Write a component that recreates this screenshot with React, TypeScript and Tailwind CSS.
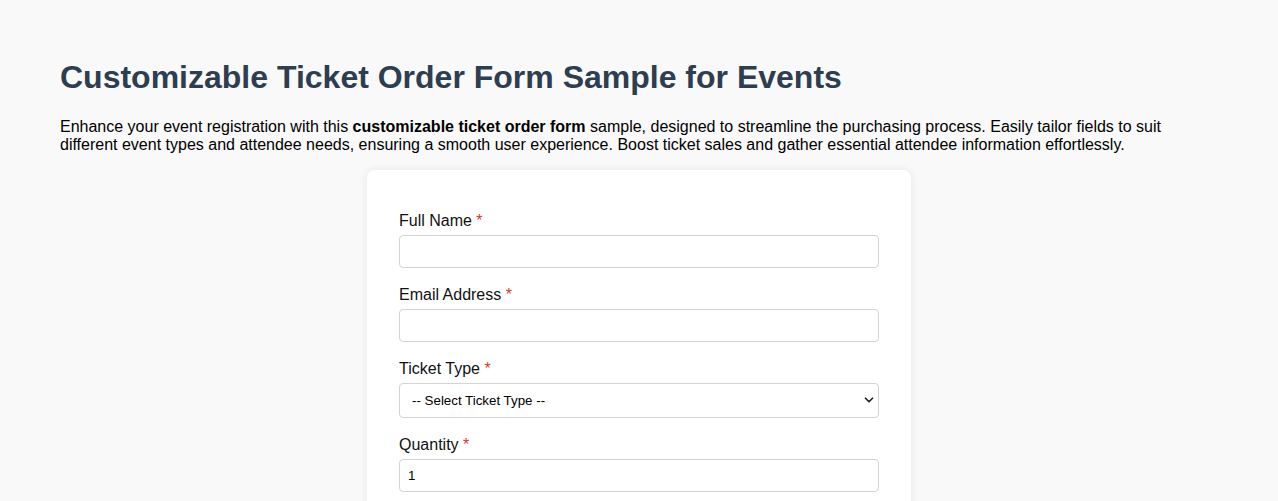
import { ChevronDown } from "lucide-react";

const fields = [
  { label: "Full Name", type: "text", value: "" },
  { label: "Email Address", type: "email", value: "" },
];

function Label({ text }: { text: string }) {
  return (
    <label className="block text-[16px] leading-[18px] text-[#111] mb-[5px]">
      {text} <span className="text-[#d9362b]">*</span>
    </label>
  );
}

export default function App() {
  return (
    <div className="min-h-screen bg-[#f9f9f9] px-[60px] pt-[59px] pb-10 font-['Liberation_Sans',Arial,sans-serif] text-black">
      <h1 className="text-[32px] leading-[37px] font-bold text-[#2c3e50]">
        Customizable Ticket Order Form Sample for Events
      </h1>
      <p className="mt-[22px] text-[16px] leading-[18px]">
        Enhance your event registration with this{" "}
        <strong>customizable ticket order form</strong> sample, designed to
        streamline the purchasing process. Easily tailor fields to suit
        different event types and attendee needs, ensuring a smooth user
        experience. Boost ticket sales and gather essential attendee
        information effortlessly.
      </p>

      <div className="mx-auto mt-[16px] w-[544px] rounded-lg bg-white px-8 pt-[42px] pb-8 shadow-[0_0_10px_rgba(0,0,0,0.08)]">
        {fields.map((f) => (
          <div key={f.label} className="mb-[18px]">
            <Label text={f.label} />
            <input
              type={f.type}
              defaultValue={f.value}
              className="block h-[33px] w-full rounded border border-[#d4d4d4] bg-white px-2 text-[13.33px] outline-none"
            />
          </div>
        ))}

        <div className="mb-[18px]">
          <Label text="Ticket Type" />
          <div className="relative">
            <select className="block h-[35px] w-full appearance-none rounded border border-[#d4d4d4] bg-white pl-3 text-[13.33px] text-black outline-none">
              <option>-- Select Ticket Type --</option>
              <option>General Admission</option>
              <option>VIP</option>
            </select>
            <ChevronDown
              size={14}
              strokeWidth={3}
              className="pointer-events-none absolute right-[3px] top-[10px] text-[#222]"
            />
          </div>
        </div>

        <div className="mb-[18px]">
          <Label text="Quantity" />
          <input
            type="number"
            defaultValue={1}
            className="block h-[33px] w-full rounded border border-[#d4d4d4] bg-white px-2 text-[13.33px] outline-none"
          />
        </div>
      </div>
    </div>
  );
}
